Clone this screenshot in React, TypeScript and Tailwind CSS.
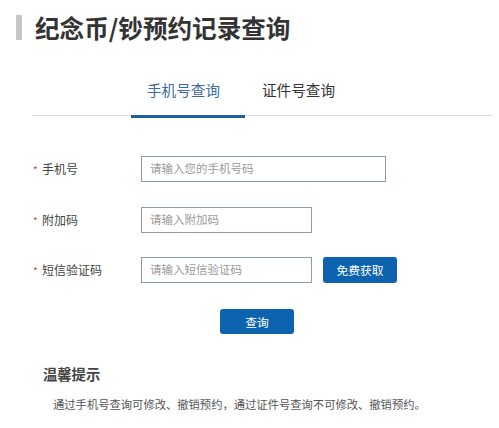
import React from "react";

const font = { fontFamily: '"Noto Sans CJK SC", "Noto Sans", sans-serif' };

function Row({ label, placeholder, width, extra, className }: { label: string; placeholder: string; width: string; extra?: React.ReactNode; className?: string }) {
  return (
    <div className={`flex items-center h-[26px] ${className ?? ""}`}>
      <div className="w-[108px] flex items-center">
        <span className="w-[9px] text-[10px] leading-none text-[#d0403a] pt-[2px]">*</span>
        <span className="text-[12px] leading-none text-[#444]">{label}</span>
      </div>
      <div className={`${width} h-[26px] border border-[#8a9fa4] bg-white flex items-center pl-[8px] text-[11.5px] leading-none text-[#9a9a9a]`}>
        {placeholder}
      </div>
      {extra}
    </div>
  );
}

export default function App() {
  return (
    <div className="w-[499px] h-[428px] bg-white overflow-hidden" style={font}>
      <div className="pt-[15px] pl-[16px] flex items-center h-[40px]">
        <div className="w-[6px] h-[25px] bg-[#c6c6c6]" />
        <div className="ml-[13px] text-[24.6px] leading-none font-bold text-[#333]">纪念币/钞预约记录查询</div>
      </div>

      <div className="mt-[25px] ml-[32px] mr-[7px] border-b border-[#dcdcdc] flex h-[51px]">
        <div className="ml-[99px] w-[114px] h-[50px] relative flex items-center pl-[16px] text-[14.6px] leading-none text-[#3a6aa0]">
          手机号查询
          <span className="absolute left-0 right-0 bottom-[-3px] h-[3px] bg-[#1f5f9e]" />
        </div>
        <div className="pl-[17px] h-[50px] flex items-center text-[14.6px] leading-none text-[#333]">证件号查询</div>
      </div>

      <div className="mt-[40px] pl-[33px]">
        <Row label="手机号" placeholder="请输入您的手机号码" width="w-[245px]" />
        <Row label="附加码" placeholder="请输入附加码" width="w-[171px]" className="mt-[25px]" />
        <Row
          label="短信验证码"
          placeholder="请输入短信验证码"
          width="w-[171px]"
          className="mt-[24px]"
          extra={
            <button className="ml-[11px] w-[74px] h-[26px] rounded-[3px] bg-[#0d63ae] text-white text-[11.8px] leading-none">免费获取</button>
          }
        />
      </div>

      <div className="mt-[25px] pl-[220px]">
        <button className="w-[74px] h-[25px] rounded-[3px] bg-[#0d63ae] text-white text-[11.8px] leading-none">查询</button>
      </div>

      <div className="mt-[33px] pl-[43px] text-[14.3px] leading-none font-bold text-[#444]">温馨提示</div>
      <div className="mt-[17px] pl-[53px] text-[11.3px] leading-none text-[#555]">
        通过手机号查询可修改、撤销预约，通过证件号查询不可修改、撤销预约。
      </div>
    </div>
  );
}
